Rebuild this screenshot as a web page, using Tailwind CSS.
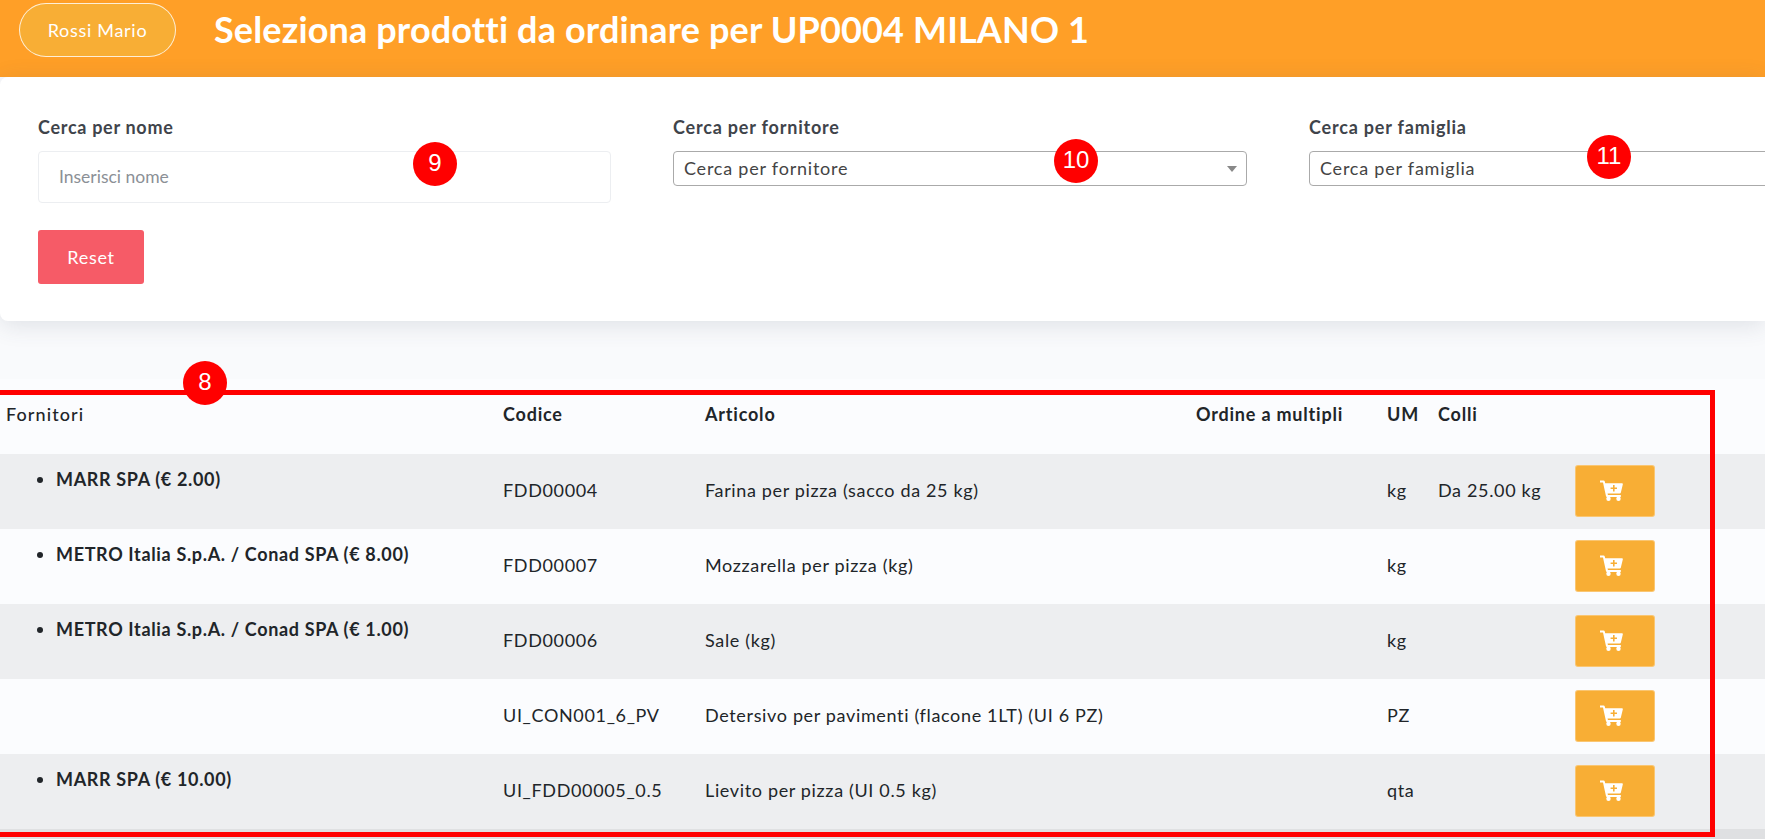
<!DOCTYPE html>
<html lang="it">
<head>
  <meta charset="UTF-8" />
  <title>Seleziona prodotti</title>
  <script src="https://cdn.jsdelivr.net/npm/@tailwindcss/browser@4"></script>
</head>
<body class="relative w-[1765px] h-[839px] overflow-hidden bg-[#f9fafc] font-['Lato',sans-serif] text-[#212529]">
  <!-- Header -->
  <header class="h-[77px] bg-[#ff9f27] flex items-start pl-[19px] pt-[3px]">
    <button class="w-[157px] h-[54px] rounded-full border border-white/80 bg-[#f8ae35] text-white text-[18px] tracking-[0.7px]">Rossi Mario</button>
    <h1 class="ml-[38px] mt-[6px] text-white text-[36px] leading-[40px] font-bold tracking-[0.15px] whitespace-nowrap">Seleziona prodotti da ordinare per UP0004 MILANO 1</h1>
  </header>

  <!-- Filters -->
  <section class="w-full h-[244px] bg-white rounded-l-lg shadow-[0_4px_24px_rgba(60,70,90,0.14)] pl-[38px] pt-[39px] relative overflow-x-clip">
    <div class="flex gap-[62px]">
      <div class="w-[573px] shrink-0">
        <label class="block text-[18px] leading-[22px] font-bold text-[#3f444b] tracking-[0.7px] mb-[13px]">Cerca per nome</label>
        <input placeholder="Inserisci nome" class="w-full h-[52px] rounded border border-[#eceef1] pl-[20px] pb-[2px] text-[17.5px] placeholder:text-[#8b9096] outline-none" />
      </div>
      <div class="w-[574px] shrink-0">
        <label class="block text-[18px] leading-[22px] font-bold text-[#3f444b] tracking-[0.8px] mb-[13px]">Cerca per fornitore</label>
        <div class="h-[35px] rounded border border-[#aaaaaa] pl-[10px] pr-[9px] flex items-center justify-between text-[18px] tracking-[0.78px] text-[#444444]">
          <span>Cerca per fornitore</span>
          <span class="w-0 h-0 border-x-[5px] border-x-transparent border-t-[6px] border-t-[#888888]"></span>
        </div>
      </div>
      <div class="w-[574px] shrink-0">
        <label class="block text-[18px] leading-[22px] font-bold text-[#3f444b] tracking-[0.8px] mb-[13px]">Cerca per famiglia</label>
        <div class="h-[35px] rounded border border-[#aaaaaa] pl-[10px] flex items-center text-[18px] tracking-[0.78px] text-[#444444]">Cerca per famiglia</div>
      </div>
    </div>
    <button class="mt-[27px] block w-[106px] h-[54px] rounded-[3px] bg-[#f65b67] text-white text-[18px] tracking-[0.7px]">Reset</button>
  </section>

  <!-- Products -->
  <table class="mt-[58px] w-full table-fixed border-collapse bg-[#fbfcfe] text-[18px] tracking-[0.65px]">
    <colgroup>
      <col class="w-[497px]" /><col class="w-[202px]" /><col class="w-[491px]" /><col class="w-[191px]" /><col class="w-[51px]" /><col class="w-[137px]" /><col />
    </colgroup>
    <thead>
      <tr class="h-[75px] text-left align-top">
        <th class="pl-[6px] pt-[22px] font-medium tracking-[1.1px]">Fornitori</th>
        <th class="pl-[6px] pt-[22px] font-bold tracking-[0.8px]">Codice</th>
        <th class="pl-[6px] pt-[22px] font-bold tracking-[0.8px]">Articolo</th>
        <th class="pl-[6px] pt-[22px] font-bold tracking-[0.8px]">Ordine a multipli</th>
        <th class="pl-[6px] pt-[22px] font-bold tracking-[0.8px]">UM</th>
        <th class="pl-[6px] pt-[22px] font-bold tracking-[0.8px]">Colli</th>
        <th></th>
      </tr>
    </thead>
    <tbody>
      <tr class="h-[75px] bg-[#edeef0]">
        <td class="pl-[56px] align-top pt-[12px]"><ul class="list-disc"><li class="font-bold">MARR SPA (€ 2.00)</li></ul></td>
        <td class="pl-[6px] pb-[2px]">FDD00004</td>
        <td class="pl-[6px] pb-[2px]">Farina per pizza (sacco da 25 kg)</td>
        <td></td>
        <td class="pl-[6px] pb-[2px]">kg</td>
        <td class="pl-[6px] pb-[2px]">Da 25.00 kg</td>
        <td class="pl-[6px] pb-[2px]"><button class="w-[80px] h-[52px] pr-[7px] rounded-[3px] border border-white/30 bg-[#f8ae35] flex items-center justify-center"><svg class="w-[23px] h-[21px]" viewBox="0 0 23 21"><path fill="#fff" d="M0 0.5h3.6c.6 0 1 .4 1.2 1l.4 1.8H22c.6 0 1 .6.8 1.2l-2 8.2c-.1.5-.5.8-1 .8H7.6l.3 1.5H20c.6 0 1 .4 1 1s-.4 1-1 1H7c-.5 0-.9-.3-1-.8L3 2.5H0z"/><circle fill="#fff" cx="8.5" cy="18.7" r="2.2"/><circle fill="#fff" cx="18.5" cy="18.7" r="2.2"/><path fill="#f8ae35" d="M13 5h1.6v2.4H17V9h-2.4v2.4H13V9h-2.4V7.4H13z"/></svg></button></td>
      </tr>
      <tr class="h-[75px]">
        <td class="pl-[56px] align-top pt-[12px]"><ul class="list-disc"><li class="font-bold">METRO Italia S.p.A. / Conad SPA (€ 8.00)</li></ul></td>
        <td class="pl-[6px] pb-[2px]">FDD00007</td>
        <td class="pl-[6px] pb-[2px]">Mozzarella per pizza (kg)</td>
        <td></td>
        <td class="pl-[6px] pb-[2px]">kg</td>
        <td></td>
        <td class="pl-[6px] pb-[2px]"><button class="w-[80px] h-[52px] pr-[7px] rounded-[3px] border border-white/30 bg-[#f8ae35] flex items-center justify-center"><svg class="w-[23px] h-[21px]" viewBox="0 0 23 21"><path fill="#fff" d="M0 0.5h3.6c.6 0 1 .4 1.2 1l.4 1.8H22c.6 0 1 .6.8 1.2l-2 8.2c-.1.5-.5.8-1 .8H7.6l.3 1.5H20c.6 0 1 .4 1 1s-.4 1-1 1H7c-.5 0-.9-.3-1-.8L3 2.5H0z"/><circle fill="#fff" cx="8.5" cy="18.7" r="2.2"/><circle fill="#fff" cx="18.5" cy="18.7" r="2.2"/><path fill="#f8ae35" d="M13 5h1.6v2.4H17V9h-2.4v2.4H13V9h-2.4V7.4H13z"/></svg></button></td>
      </tr>
      <tr class="h-[75px] bg-[#edeef0]">
        <td class="pl-[56px] align-top pt-[12px]"><ul class="list-disc"><li class="font-bold">METRO Italia S.p.A. / Conad SPA (€ 1.00)</li></ul></td>
        <td class="pl-[6px] pb-[2px]">FDD00006</td>
        <td class="pl-[6px] pb-[2px]">Sale (kg)</td>
        <td></td>
        <td class="pl-[6px] pb-[2px]">kg</td>
        <td></td>
        <td class="pl-[6px] pb-[2px]"><button class="w-[80px] h-[52px] pr-[7px] rounded-[3px] border border-white/30 bg-[#f8ae35] flex items-center justify-center"><svg class="w-[23px] h-[21px]" viewBox="0 0 23 21"><path fill="#fff" d="M0 0.5h3.6c.6 0 1 .4 1.2 1l.4 1.8H22c.6 0 1 .6.8 1.2l-2 8.2c-.1.5-.5.8-1 .8H7.6l.3 1.5H20c.6 0 1 .4 1 1s-.4 1-1 1H7c-.5 0-.9-.3-1-.8L3 2.5H0z"/><circle fill="#fff" cx="8.5" cy="18.7" r="2.2"/><circle fill="#fff" cx="18.5" cy="18.7" r="2.2"/><path fill="#f8ae35" d="M13 5h1.6v2.4H17V9h-2.4v2.4H13V9h-2.4V7.4H13z"/></svg></button></td>
      </tr>
      <tr class="h-[75px]">
        <td></td>
        <td class="pl-[6px] pb-[2px]">UI_CON001_6_PV</td>
        <td class="pl-[6px] pb-[2px]">Detersivo per pavimenti (flacone 1LT) (UI 6 PZ)</td>
        <td></td>
        <td class="pl-[6px] pb-[2px]">PZ</td>
        <td></td>
        <td class="pl-[6px] pb-[2px]"><button class="w-[80px] h-[52px] pr-[7px] rounded-[3px] border border-white/30 bg-[#f8ae35] flex items-center justify-center"><svg class="w-[23px] h-[21px]" viewBox="0 0 23 21"><path fill="#fff" d="M0 0.5h3.6c.6 0 1 .4 1.2 1l.4 1.8H22c.6 0 1 .6.8 1.2l-2 8.2c-.1.5-.5.8-1 .8H7.6l.3 1.5H20c.6 0 1 .4 1 1s-.4 1-1 1H7c-.5 0-.9-.3-1-.8L3 2.5H0z"/><circle fill="#fff" cx="8.5" cy="18.7" r="2.2"/><circle fill="#fff" cx="18.5" cy="18.7" r="2.2"/><path fill="#f8ae35" d="M13 5h1.6v2.4H17V9h-2.4v2.4H13V9h-2.4V7.4H13z"/></svg></button></td>
      </tr>
      <tr class="h-[75px] bg-[#edeef0]">
        <td class="pl-[56px] align-top pt-[12px]"><ul class="list-disc"><li class="font-bold">MARR SPA (€ 10.00)</li></ul></td>
        <td class="pl-[6px] pb-[2px]">UI_FDD00005_0.5</td>
        <td class="pl-[6px] pb-[2px]">Lievito per pizza (UI 0.5 kg)</td>
        <td></td>
        <td class="pl-[6px] pb-[2px]">qta</td>
        <td></td>
        <td class="pl-[6px] pb-[2px]"><button class="w-[80px] h-[52px] pr-[7px] rounded-[3px] border border-white/30 bg-[#f8ae35] flex items-center justify-center"><svg class="w-[23px] h-[21px]" viewBox="0 0 23 21"><path fill="#fff" d="M0 0.5h3.6c.6 0 1 .4 1.2 1l.4 1.8H22c.6 0 1 .6.8 1.2l-2 8.2c-.1.5-.5.8-1 .8H7.6l.3 1.5H20c.6 0 1 .4 1 1s-.4 1-1 1H7c-.5 0-.9-.3-1-.8L3 2.5H0z"/><circle fill="#fff" cx="8.5" cy="18.7" r="2.2"/><circle fill="#fff" cx="18.5" cy="18.7" r="2.2"/><path fill="#f8ae35" d="M13 5h1.6v2.4H17V9h-2.4v2.4H13V9h-2.4V7.4H13z"/></svg></button></td>
      </tr>
    </tbody>
  </table>
  <div class="h-[10px] bg-[#dfe0e2]"></div>

  <!-- Annotations over the screenshot -->
  <div class="absolute left-[-6px] top-[390px] w-[1721px] h-[447px] border-[5px] border-[#ff0000]"></div>
  <div class="absolute left-[183px] top-[361px] w-[44px] h-[44px] pb-[3px] rounded-full bg-[#ff0000] text-white text-[24px] font-['Liberation_Sans',sans-serif] flex items-center justify-center">8</div>
  <div class="absolute left-[413px] top-[142px] w-[44px] h-[44px] pb-[3px] rounded-full bg-[#ff0000] text-white text-[24px] font-['Liberation_Sans',sans-serif] flex items-center justify-center">9</div>
  <div class="absolute left-[1054px] top-[139px] w-[44px] h-[44px] pb-[3px] rounded-full bg-[#ff0000] text-white text-[24px] font-['Liberation_Sans',sans-serif] flex items-center justify-center">10</div>
  <div class="absolute left-[1587px] top-[135px] w-[44px] h-[44px] pb-[3px] rounded-full bg-[#ff0000] text-white text-[24px] font-['Liberation_Sans',sans-serif] flex items-center justify-center">11</div>
</body>
</html>
